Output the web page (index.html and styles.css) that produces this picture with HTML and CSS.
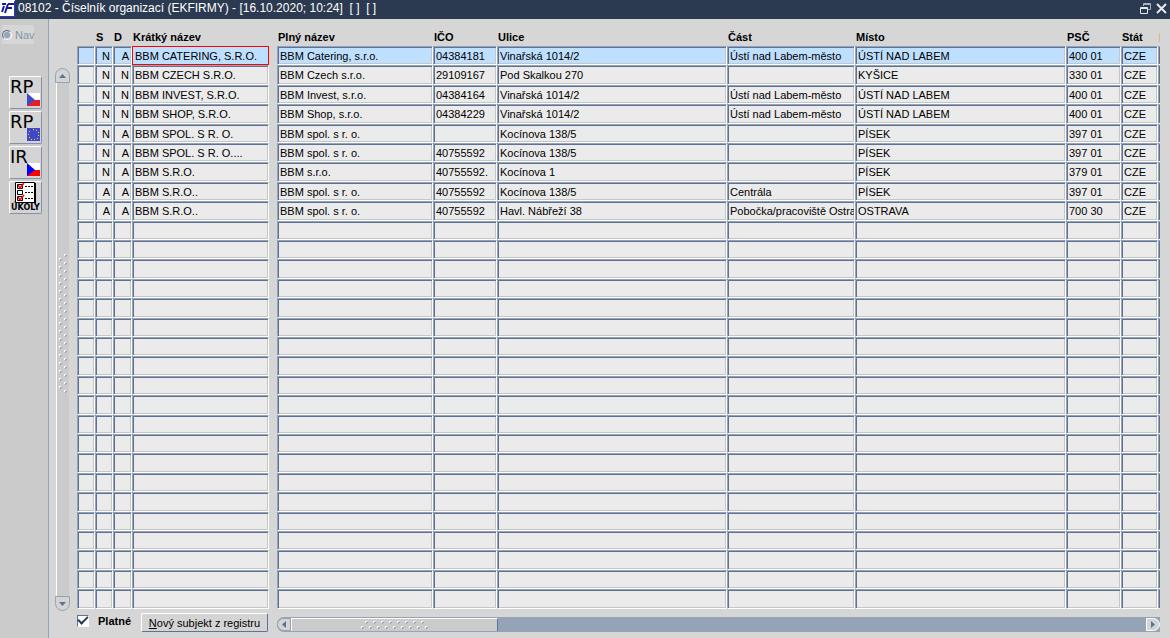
FILE: index.html
```html
<!DOCTYPE html>
<html lang="cs">
<head>
  <meta charset="UTF-8" />
  <meta name="viewport" content="width=device-width, initial-scale=1.0" />
  <title>Číselník organizací</title>
  <link rel="stylesheet" href="styles.css">
</head>
<body>
  <header class="titlebar">
    <svg class="logo" width="15" height="17" viewBox="0 0 15 17" aria-hidden="true">
      <rect width="15" height="17" fill="#fff" />
      <path d="M0 16.500h15M14.500 1v16" stroke="#2a35d8" />
      <path d="M2 4h4M4 6L2 12M8 4h6M8 4L5 13M7 8h5" stroke="#1a1a9c" stroke-width="2" fill="none" />
    </svg>
    <h1>08102 - Číselník organizací (EKFIRMY) - [16.10.2020; 10:24]&nbsp; [ ]&nbsp; [ ]</h1>
    <button class="win-btn" aria-label="Obnovit">
      <svg width="11" height="11" viewBox="0 0 11 11" fill="none">
        <path d="M3.500 3V.5h7v6H8M3 1.500h8" stroke="#aab2bd" />
        <path d="M.5 4.500h7v6h-7zM0 5.500h8" stroke="#e4e7eb" />
      </svg>
    </button>
    <button class="win-btn" aria-label="Zavřít">
      <svg width="11" height="11" viewBox="0 0 11 11"><path d="M1 1l9 9M10 1l-9 9" stroke="#e8e8e8" stroke-width="2" /></svg>
    </button>
  </header>

  <div class="window">
    <aside class="sidebar">
      <label class="nav"><input type="radio" name="nav" disabled /> Nav</label>
      <div class="tools">
        <button class="tool" aria-label="RP CZ">
          <span>RP</span>
          <svg width="13" height="13" viewBox="0 0 13 13"><path d="M0 0h13v7H0z" fill="#fff" /><path d="M0 7h13v6H0z" fill="#ec1c24" /><path d="M0 0l8 7-8 6z" fill="#3f48cc" /></svg>
        </button>
        <button class="tool" aria-label="RP EU">
          <span>RP</span>
          <svg width="13" height="13" viewBox="0 0 13 13" shape-rendering="crispEdges"><path d="M0 0h13v13H0z" fill="#3f48cc" /><path d="M6 1h1v1H6zM9 2h1v1H9zM11 4h1v1h-1zM11 7h1v1h-1zM10 10h1v1h-1zM7 11h1v1H7zM4 11h1v1H4zM2 9h1v1H2zM1 6h1v1H1zM2 3h1v1H2z" fill="#fff200" /></svg>
        </button>
        <button class="tool" aria-label="IR CZ">
          <span>IR</span>
          <svg width="13" height="13" viewBox="0 0 13 13"><path d="M0 0h13v7H0z" fill="#fff" /><path d="M0 7h13v6H0z" fill="#f00" /><path d="M0 0l8 7-8 6z" fill="#00f" /></svg>
        </button>
        <button class="tool tasks" aria-label="Úkoly">
          <svg width="21" height="21" viewBox="0 0 21 21">
            <path d="M.5.5h19v20H.5z" fill="#fff" stroke="#000" />
            <path d="M20 1v20" stroke="#000" stroke-width="2" />
            <path d="M2.500 2.500h5v4h-5zM2.500 8.500h5v4h-5zM2.500 14.500h5v4h-5z" fill="none" stroke="#000" />
            <path d="M10 4.500h8M10 10.500h8M10 16.500h8" stroke="#000" stroke-dasharray="2 1" />
            <path d="M3 3l2 3 4-5M3 15l2 3 4-5" fill="none" stroke="#f00" stroke-width="1.500" />
          </svg>
          <b>ÚKOLY</b>
        </button>
      </div>
    </aside>

    <div class="vscroll">
      <button class="arrow up" aria-label="Nahoru"><svg width="7" height="4" viewBox="0 0 7 4"><path d="M0 4h7L3.500 0z" /></svg></button>
      <div class="track">
        <svg class="grip" width="10" height="140"><rect width="10" height="140" fill="url(#dots)" /></svg>
      </div>
      <button class="arrow down" aria-label="Dolů"><svg width="7" height="4" viewBox="0 0 7 4"><path d="M0 0h7L3.500 4z" /></svg></button>
    </div>

    <main class="content">
      <table class="grid">
        <colgroup>
          <col class="c-mark"><col class="c-mark"><col class="c-flag"><col class="c-short"><col class="c-gap">
          <col class="c-full"><col class="c-ico"><col class="c-street"><col class="c-part"><col><col class="c-zip">
          <col class="c-state"><col class="c-edge">
        </colgroup>
        <thead>
          <tr>
            <th></th><th>S</th><th>D</th><th>Krátký název</th><th></th>
            <th>Plný název</th><th>IČO</th><th>Ulice</th><th>Část</th><th>Místo</th><th>PSČ</th><th>Stát</th><th class="next"></th>
          </tr>
        </thead>
        <tbody id="rows"></tbody>
      </table>

      <footer class="footer">
        <label class="valid"><input type="checkbox" checked /> Platné</label>
        <button class="register"><u>N</u>ový subjekt z registru</button>
        <div class="hscroll">
          <button class="arrow left" aria-label="Vlevo"><svg width="4" height="7" viewBox="0 0 4 7"><path d="M4 0v7L0 3.500z" /></svg></button>
          <div class="thumb">
            <svg class="grip" width="68" height="8"><rect width="68" height="8" fill="url(#dots-h)" /></svg>
          </div>
          <button class="arrow right" aria-label="Vpravo"><svg width="4" height="7" viewBox="0 0 4 7"><path d="M0 0v7l4-3.500z" /></svg></button>
        </div>
      </footer>
    </main>
  </div>

  <svg class="defs" width="0" height="0" aria-hidden="true">
    <pattern id="dots" width="10" height="8" patternUnits="userSpaceOnUse">
      <path d="M6 0h2v2H6zM1 4h2v2H1z" fill="#fff" />
      <path d="M7 1h2v1H8v1H7zM2 5h2v1H3v1H2z" fill="#94a3b6" />
    </pattern>
    <pattern id="dots-h" width="8" height="8" patternUnits="userSpaceOnUse">
      <path d="M4 0h2v2H4zM0 5h2v2H0z" fill="#fff" />
      <path d="M5 1h2v1H6v1H5zM1 6h2v1H2v1H1z" fill="#94a3b6" />
    </pattern>
  </svg>
  <script src="script.js"></script>
</body>
</html>
```
FILE: styles.css
```css
* {
  box-sizing: border-box;
}
body {
  margin: 0;
  min-height: 100vh;
  display: flex;
  flex-direction: column;
  background-color: #d6d6d6;
  color: #000;
  font-family: "Liberation Sans", Arial, sans-serif;
  font-size: 11px;
}
button {
  font: inherit;
  color: inherit;
  padding: 0;
  border: none;
  cursor: pointer;
}
.defs {
  position: absolute;
}

/* title bar */
.titlebar {
  display: flex;
  align-items: flex-start;
  height: 19px;
  padding-right: 3px;
  background-color: #2b3a50;
  color: #fff;
}
.titlebar h1 {
  flex: 1;
  margin: 0 0 0 3px;
  font-size: 12px;
  font-weight: normal;
  line-height: 17px;
}
.win-btn {
  display: flex;
  width: 11px;
  margin: 3px 0 0 5px;
  background: none;
}
.window {
  flex: 1;
  display: flex;
}

/* sidebar */
.sidebar {
  width: 49px;
  padding-top: 6px;
  background-color: #cbcbcb;
  border-right: 1px solid #94a3b6;
}
.nav {
  display: flex;
  align-items: center;
  gap: 3px;
  width: 32px;
  height: 19px;
  margin-left: 2px;
  background-color: #d6d6d6;
  color: #8494ab;
}
.nav input {
  appearance: none;
  flex: none;
  width: 10px;
  height: 10px;
  margin: 0;
  border: 1px solid #5c7397;
  border-right-color: #fff;
  border-bottom-color: #fff;
  border-radius: 50%;
  background-color: #94a3b6;
  box-shadow: inset 0 0 0 1px #d6d6d6;
}
.tools {
  display: flex;
  flex-direction: column;
  gap: 2px;
  margin: 32px 0 0 9px;
}
.tool {
  position: relative;
  width: 33px;
  height: 33px;
  border: 1px solid #fff;
  border-right: 1px solid #8292ab;
  border-bottom: 1px solid #8292ab;
  border-radius: 2px;
  background-color: #d4d4d4;
  overflow: hidden;
}
.tool span {
  position: absolute;
  top: 1px;
  left: 0;
  font-family: "DejaVu Sans", sans-serif;
  font-size: 18px;
  line-height: 18px;
}
.tool svg {
  position: absolute;
  right: 1px;
  bottom: 2px;
}
.tasks {
  display: flex;
  flex-direction: column;
  align-items: center;
}
.tasks svg {
  position: static;
}
.tasks b {
  font-family: "DejaVu Sans", sans-serif;
  font-size: 8px;
  line-height: 9px;
}

/* scroll bars */
.arrow {
  display: flex;
  align-items: center;
  justify-content: center;
  flex: none;
  background-color: #d4d4d4;
  border: 1px solid #94a3b6;
}
.arrow path {
  fill: #5c7397;
}
.vscroll {
  display: flex;
  flex-direction: column;
  align-items: center;
  width: 15px;
  margin: 49px 0 27px 6px;
}
.up, .down {
  width: 15px;
  height: 15px;
}
.up {
  border-radius: 8px 8px 0 0;
}
.down {
  border-radius: 0 0 8px 8px;
}
.track {
  flex: 1;
  display: flex;
  align-items: center;
  width: 13px;
  padding: 0 0 32px 1px;
  border-left: 1px solid #fff;
  background-color: #cbcbcb;
}
.hscroll {
  flex: 1;
  display: flex;
  height: 15px;
  margin-top: 4px;
  border-top: 1px solid #94a3b6;
  border-bottom: 1px solid #94a3b6;
  border-radius: 7px 0 0 7px;
  background-color: #94a3b6;
}
.left, .right {
  width: 14px;
}
.left {
  border-radius: 7px 0 0 7px;
}
.right {
  margin-left: auto;
  border-color: #fff;
  border-radius: 0 7px 7px 0;
}
.thumb {
  display: flex;
  align-items: center;
  justify-content: center;
  width: 207px;
  border-top: 1px solid #fff;
  border-left: 1px solid #fff;
  border-right: 1px solid #5c7397;
  background-color: #cbcbcb;
}

/* grid */
.content {
  flex: 1;
  min-width: 0;
  padding: 10px 10px 0 7px;
}
.grid {
  width: 100%;
  table-layout: fixed;
  border-spacing: 0;
}
.c-mark { width: 18px; }
.c-flag { width: 19px; }
.c-short { width: 137px; }
.c-gap { width: 8px; }
.c-full { width: 156px; }
.c-ico { width: 64px; }
.c-street { width: 230px; }
.c-part { width: 128px; }
.c-zip { width: 55px; }
.c-state { width: 37px; }
.c-edge { width: 2px; }
.grid th {
  height: 17px;
  padding: 0 0 0 1px;
  text-align: left;
  line-height: 17px;
  vertical-align: top;
}
/* first pixels of the column that is scrolled out of view */
.grid .next::before {
  content: "";
  display: block;
  height: 9px;
  margin-top: 4px;
  background-color: #dcb878;
}
.grid tbody tr {
  height: 19px;
}
.grid tbody tr:nth-child(5n + 2),
.grid tbody tr:nth-child(5n + 4) {
  height: 20px;
}
.grid td {
  padding: 1px 0 0 2px;
  border: 1px solid #fff;
  border-top-color: #94a3b6;
  border-left-color: #94a3b6;
  background-color: #ebebeb;
  box-shadow: inset 1px 1px #5c7397, inset -1px -1px #c6c6c6;
  line-height: 16px;
  vertical-align: top;
  white-space: nowrap;
  overflow: hidden;
}
.grid .right-text {
  padding: 1px 2px 0 0;
  text-align: right;
}
.grid .gap {
  border: none;
  background: none;
  box-shadow: none;
}
.grid .edge {
  padding: 0;
  border-right: none;
}
.grid .current td {
  background-color: #bfdfff;
}
.grid .current .gap {
  background: none;
}
.grid .focused {
  padding: 0;
  border: 1px solid #f00;
  box-shadow: none;
}
.focused input {
  display: block;
  width: 100%;
  height: 17px;
  padding: 0 0 0 2px;
  border: none;
  outline: none;
  background: none;
  color: inherit;
  font: inherit;
}

/* footer */
.footer {
  display: flex;
  align-items: center;
  margin-top: 4px;
}
.valid {
  display: flex;
  align-items: center;
  gap: 9px;
  width: 64px;
  margin-bottom: 4px;
  font-weight: bold;
}
.valid input {
  display: grid;
  place-items: center;
  width: 12px;
  height: 12px;
  margin: 0;
  appearance: none;
  border: 1px solid #5c7397;
  border-right-color: #fff;
  border-bottom-color: #fff;
  background: #fff;
}
.valid input:checked::before {
  content: "";
  width: 8px;
  height: 4px;
  margin-bottom: 3px;
  border-left: 2px solid #2b3a50;
  border-bottom: 2px solid #2b3a50;
  transform: rotate(-45deg);
}
.register {
  width: 127px;
  height: 19px;
  margin-right: 9px;
  border: 1px solid #fff;
  border-right-color: #5c7397;
  border-bottom-color: #5c7397;
  border-radius: 2px;
  background-color: #d4d4d4;
}
```
FILE: script.js
```js
const firms = [
  ["N", "A", "BBM CATERING, S.R.O.", "BBM Catering, s.r.o.", "04384181", "Vinařská 1014/2", "Ústí nad Labem-město", "ÚSTÍ NAD LABEM", "400 01", "CZE"],
  ["N", "N", "BBM CZECH S.R.O.", "BBM Czech s.r.o.", "29109167", "Pod Skalkou 270", "", "KYŠICE", "330 01", "CZE"],
  ["N", "N", "BBM INVEST, S.R.O.", "BBM Invest, s.r.o.", "04384164", "Vinařská 1014/2", "Ústí nad Labem-město", "ÚSTÍ NAD LABEM", "400 01", "CZE"],
  ["N", "N", "BBM SHOP, S.R.O.", "BBM Shop, s.r.o.", "04384229", "Vinařská 1014/2", "Ústí nad Labem-město", "ÚSTÍ NAD LABEM", "400 01", "CZE"],
  ["N", "A", "BBM SPOL. S R. O.", "BBM spol. s r. o.", "", "Kocínova 138/5", "", "PÍSEK", "397 01", "CZE"],
  ["N", "A", "BBM SPOL. S R. O....", "BBM spol. s r. o.", "40755592", "Kocínova 138/5", "", "PÍSEK", "397 01", "CZE"],
  ["N", "A", "BBM S.R.O.", "BBM s.r.o.", "40755592.", "Kocínova 1", "", "PÍSEK", "379 01", "CZE"],
  ["A", "A", "BBM S.R.O..", "BBM spol. s r. o.", "40755592", "Kocínova 138/5", "Centrála", "PÍSEK", "397 01", "CZE"],
  ["A", "A", "BBM S.R.O..", "BBM spol. s r. o.", "40755592", "Havl. Nábřeží 38", "Pobočka/pracoviště Ostra", "OSTRAVA", "700 30", "CZE"]
];
const visibleRows = 29;
const body = document.getElementById("rows");

for (let i = 0; i < visibleRows; i++) {
  const firm = firms[i] || Array(10).fill("");
  const row = body.insertRow();
  if (i === 0) row.className = "current";
  row.insertCell();
  firm.forEach((text, col) => {
    const cell = row.insertCell();
    if (i === 0 && col === 2) {
      cell.className = "focused";
      const input = document.createElement("input");
      input.type = "text";
      input.value = text;
      input.setAttribute("aria-label", "Krátký název");
      cell.appendChild(input);
    } else {
      cell.textContent = text;
    }
    if (col < 2) cell.className = "right-text";
    // free space between the fixed and the scrolled columns
    if (col === 2) row.insertCell().className = "gap";
  });
  row.insertCell().className = "edge";
}
```
